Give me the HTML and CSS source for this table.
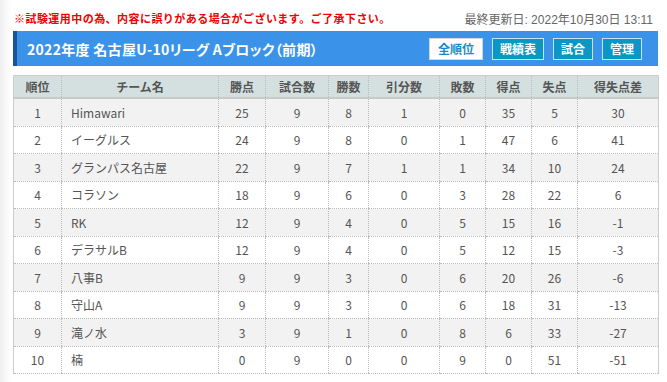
FILE: index.html
```html
<!DOCTYPE html>
<html lang="ja">
<head>
<meta charset="utf-8">
<link rel="stylesheet" href="styles.css">
</head>
<body>
<div class="page">
  <div class="topline">
    <p class="notice">※試験運用中の為、内容に誤りがある場合がございます。ご了承下さい。</p>
    <p class="updated">最終更新日: 2022年10月30日 13:11</p>
  </div>
  <div class="titlebar">
    <h1 class="title">2022年度 名古屋U-10リーグ Aブロック（前期）</h1>
    <nav class="btns">
      <span class="btn btn-active">全順位</span>
      <span class="btn">戦績表</span>
      <span class="btn">試合</span>
      <span class="btn">管理</span>
    </nav>
  </div>
  <table class="standings">
    <colgroup>
      <col class="c1"><col class="c2"><col class="c3"><col class="c4"><col class="c5">
      <col class="c6"><col class="c7"><col class="c8"><col class="c9"><col class="c10">
    </colgroup>
    <thead>
      <tr><th>順位</th><th>チーム名</th><th>勝点</th><th>試合数</th><th>勝数</th><th>引分数</th><th>敗数</th><th>得点</th><th>失点</th><th>得失点差</th></tr>
    </thead>
    <tbody>
      <tr><td>1</td><td class="team">Himawari</td><td>25</td><td>9</td><td>8</td><td>1</td><td>0</td><td>35</td><td>5</td><td>30</td></tr>
      <tr><td>2</td><td class="team">イーグルス</td><td>24</td><td>9</td><td>8</td><td>0</td><td>1</td><td>47</td><td>6</td><td>41</td></tr>
      <tr><td>3</td><td class="team">グランパス名古屋</td><td>22</td><td>9</td><td>7</td><td>1</td><td>1</td><td>34</td><td>10</td><td>24</td></tr>
      <tr><td>4</td><td class="team">コラソン</td><td>18</td><td>9</td><td>6</td><td>0</td><td>3</td><td>28</td><td>22</td><td>6</td></tr>
      <tr><td>5</td><td class="team">RK</td><td>12</td><td>9</td><td>4</td><td>0</td><td>5</td><td>15</td><td>16</td><td>-1</td></tr>
      <tr><td>6</td><td class="team">デラサルB</td><td>12</td><td>9</td><td>4</td><td>0</td><td>5</td><td>12</td><td>15</td><td>-3</td></tr>
      <tr><td>7</td><td class="team">八事B</td><td>9</td><td>9</td><td>3</td><td>0</td><td>6</td><td>20</td><td>26</td><td>-6</td></tr>
      <tr><td>8</td><td class="team">守山A</td><td>9</td><td>9</td><td>3</td><td>0</td><td>6</td><td>18</td><td>31</td><td>-13</td></tr>
      <tr><td>9</td><td class="team">滝ノ水</td><td>3</td><td>9</td><td>1</td><td>0</td><td>8</td><td>6</td><td>33</td><td>-27</td></tr>
      <tr><td>10</td><td class="team">楠</td><td>0</td><td>9</td><td>0</td><td>0</td><td>9</td><td>0</td><td>51</td><td>-51</td></tr>
    </tbody>
  </table>
</div>
</body>
</html>
```
FILE: styles.css
```css
html, body {
  margin: 0;
  padding: 0;
}
body {
  background: linear-gradient(to right, #efefef 0, #fbfbfb 8px, #ffffff 12px);
  font-family: "Noto Sans CJK JP", "Noto Sans", sans-serif;
  color: #555;
  min-height: 382px;
}
.page {
  padding: 9px 9px 0 13px;
}
.topline {
  display: flex;
  justify-content: space-between;
  align-items: center;
  height: 18px;
  padding: 0 5px 0 1px;
}
.notice {
  margin: 0;
  color: #f00000;
  font-size: 11px;
  font-weight: bold;
  letter-spacing: 0.45px;
}
.updated {
  margin: 0;
  color: #666;
  font-size: 12px;
  font-family: "Liberation Sans", "Noto Sans CJK JP", sans-serif;
}
.titlebar {
  margin-top: 4px;
  height: 35px;
  background: #3a93e9;
  border-left: 4px solid #17569b;
  display: flex;
  align-items: center;
  justify-content: space-between;
  padding: 0 16px 0 10px;
}
.title {
  margin: 0;
  color: #fff;
  font-size: 14px;
  font-weight: bold;
  font-feature-settings: "palt";
  letter-spacing: 0.3px;
}
.btns {
  display: flex;
  gap: 9px;
}
.btn {
  box-sizing: border-box;
  height: 22px;
  padding: 0 7px;
  display: flex;
  align-items: center;
  font-size: 12px;
  font-weight: bold;
  color: #fff;
  background: #0a97c6;
  border: 1px solid #c9e3ee;
}
.btn-active {
  background: #fff;
  color: #1a8bc4;
  border-color: #cfd6da;
  padding: 0 8px;
}
.standings {
  margin-top: 9px;
  width: 645px;
  border-collapse: collapse;
  table-layout: fixed;
  font-size: 12px;
  border-left: 1px solid #ccc;
  border-right: 1px solid #ccc;
}
.c1 { width: 48px; }
.c2 { width: 157px; }
.c3 { width: 47px; }
.c4 { width: 63px; }
.c5 { width: 40px; }
.c6 { width: 71px; }
.c7 { width: 46px; }
.c8 { width: 46px; }
.c9 { width: 46px; }
.c10 { width: 81px; }
.standings th {
  height: 21px;
  padding: 0;
  background: #d4e0e0;
  color: #555;
  font-weight: bold;
  text-align: center;
  border-top: 1px solid #ccc;
  border-bottom: 2px solid #c9c9c9;
  border-left: 1px dotted #bbb;
}
.standings th:first-child { border-left: 1px solid #ccc; }
.standings td {
  height: 26.5px;
  padding: 0;
  text-align: center;
  color: #555;
  border-bottom: 1px dotted #bbb;
  border-left: 1px dotted #bbb;
}
.standings td:first-child { border-left: 1px solid #ccc; }
.standings td.team {
  text-align: left;
  padding-left: 9px;
}
.standings tbody tr:nth-child(odd) td { background: #f2f2f2; }
.standings tbody tr:nth-child(even) td { background: #fff; }
```
